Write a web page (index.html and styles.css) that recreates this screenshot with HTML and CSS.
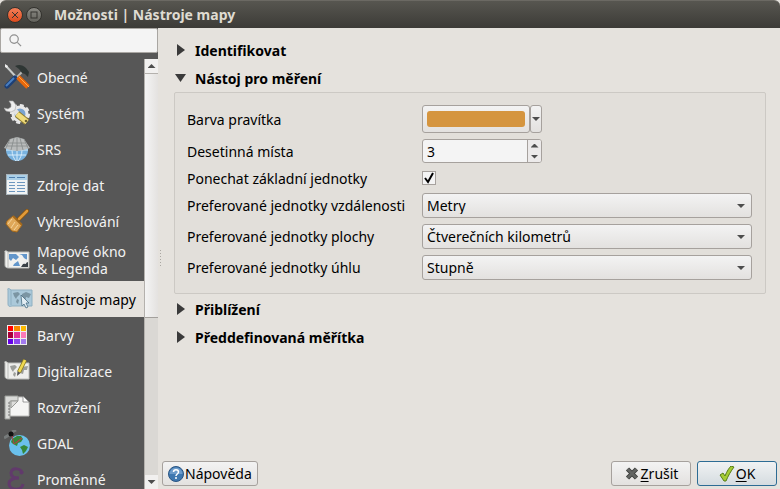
FILE: index.html
```html
<!DOCTYPE html>
<html lang="cs">
<head>
  <meta charset="UTF-8" />
  <meta name="viewport" content="width=device-width, initial-scale=1.0"/>
  <title>Možnosti | Nástroje mapy</title>
  <link rel="stylesheet" href="styles.css">
</head>

<body>
  <header class="titlebar">
    <button class="window-button close" aria-label="Zavřít">
      <svg viewBox="0 0 8 8"><path d="M1 1L7 7M7 1L1 7"/></svg>
    </button>
    <button class="window-button" aria-label="Maximalizovat">
      <svg viewBox="0 0 8 8"><rect x="1" y="1" width="6" height="6"/></svg>
    </button>
    <h1>Možnosti | Nástroje mapy</h1>
  </header>

  <div class="dialog">
    <aside class="sidebar">
      <div class="search">
        <svg viewBox="0 0 14 14"><circle cx="5.5" cy="5.5" r="4.5"/><path d="M9 9L13 13"/></svg>
        <input type="search" aria-label="Hledat">
      </div>
      <div class="list">
        <nav>
          <a href="#obecne">
            <svg viewBox="0 0 26 26">
              <path d="M2 2L13 14" stroke="#c9cccb" stroke-width="2"/>
              <path d="M1 0L4 2L3 4L1 3Z" fill="#eee"/>
              <path d="M20 6L11 15" stroke="#b8b8b4" stroke-width="2"/>
              <path d="M11 2C15 0 19 1 22 4L25 8L24 13L21 10L18 9L15 5Z" fill="#2e3634"/>
              <path d="M11 14L3 22" stroke="#1c3f77" stroke-width="5" stroke-linecap="round"/>
              <path d="M10 14L2 22" stroke="#4a7fc0" stroke-width="2"/>
              <path d="M14 13L24 23" stroke="#e8670a" stroke-width="5"/>
              <path d="M15 13L25 23" stroke="#fba64d" stroke-width="1"/>
            </svg>
            <span>Obecné</span>
          </a>
          <a href="#system">
            <svg viewBox="0 0 26 26">
              <circle cx="16" cy="14" r="7" fill="#7aa3d0" stroke="#e8e8e8" stroke-width="3"/>
              <circle cx="16" cy="14" r="9" fill="none" stroke="#e8e8e8" stroke-width="2" stroke-dasharray="4 3"/>
              <path d="M9 9L14 14" stroke="#e2e2e2" stroke-width="5"/>
              <path d="M5 1L9 1L12 5L11 10L7 12L2 11L0 8L4 9L7 7L7 4Z" fill="#eee" stroke="#aaa" stroke-width=".6"/>
              <path d="M13 14L23 22" stroke="#8f7d2f" stroke-width="7"/>
              <path d="M13 14L23 22" stroke="#f0dc7c" stroke-width="5"/>
              <circle cx="22" cy="21" r="1.3" fill="#6b6030"/>
            </svg>
            <span>Systém</span>
          </a>
          <a href="#srs">
            <svg viewBox="0 0 26 26">
              <circle cx="13" cy="14" r="11" fill="#79b3e0"/>
              <path d="M2 14H24M4 19H22M13 14V25M8 14C8 19 10 23 12 25M18 14C18 19 16 23 14 25" stroke="#d6ebfa" stroke-width="1" fill="none"/>
              <path d="M0 12L6 3L13 1L20 3L26 12L20 14L13 15L6 14Z" fill="#b9bcbc"/>
              <path d="M13 1V15M10 2L7 14M16 2L19 14M6 3L2 12M20 3L24 12M4 7H22M2 10H24" stroke="#858a8a" stroke-width=".8" fill="none"/>
            </svg>
            <span>SRS</span>
          </a>
          <a href="#zdroje">
            <svg viewBox="0 0 26 26">
              <rect x="2.5" y="2.5" width="21" height="20" fill="#f1f3f4" stroke="#a8b4bb"/>
              <rect x="3" y="3" width="20" height="5" fill="#abd0e8"/>
              <path d="M5 5.5H11M13 5.5H21" stroke="#4f7fae" stroke-width="1"/>
              <path d="M5 10.5H11M13 10.5H21M5 13.5H11M13 13.5H21M5 16.500H11M13 16.500H21M5 19.500H11M13 19.500H21" stroke="#6d97bf" stroke-width="1"/>
            </svg>
            <span>Zdroje dat</span>
          </a>
          <a href="#vykreslovani">
            <svg viewBox="0 0 26 26">
              <path d="M23 3L15 11" stroke="#8a5208" stroke-width="4" stroke-linecap="round"/>
              <path d="M23 3L15 11" stroke="#e09a3a" stroke-width="2.6" stroke-linecap="round"/>
              <path d="M9 8L18 17L13 24L8 23L2 16L3 13Z" fill="#dfa758" stroke="#a5691b"/>
              <path d="M9 8L18 17" stroke="#a5691b" stroke-width="2"/>
              <path d="M8 11L4 16M11 14L7 20M14 17L10 22" stroke="#f4d49c"/>
            </svg>
            <span>Vykreslování</span>
          </a>
          <a href="#mapove-okno" class="tall">
            <svg viewBox="0 0 26 26">
              <path d="M1 5C0 4 2 3 4 5H25V21H5C2 21 1 20 1 18Z" fill="#f1f1ef" stroke="#b9bab7"/>
              <path d="M4 5V20" stroke="#b9bab7"/>
              <path d="M5 7H12L15 10L12 13L9 11L7 14L5 12ZM15 7H23V13L20 11L18 8ZM10 17L14 14L16 19H9Z" fill="#6296cb"/>
              <path d="M17 20L19 17L24 15V20Z" fill="#3a4147"/>
              <path d="M18 16L23 12L22 17Z" fill="#eee"/>
            </svg>
            <span>Mapové okno<br>&amp; Legenda</span>
          </a>
          <a href="#nastroje-mapy" class="selected">
            <svg viewBox="0 0 26 26">
              <path d="M1 4C0 2 2 2 4 4H25V20H5C2 21 1 20 1 18Z" fill="#abc9da" stroke="#8fb0c2"/>
              <path d="M4 4V19" stroke="#8fb0c2"/>
              <path d="M6 7L11 6L13 8L10 11L9 13L7 10ZM10 13L12 14L11 18L9 16ZM15 8L19 6L24 8L22 12L19 11L18 16L16 15L15 11Z" fill="#7b95a3"/>
              <path d="M14 9L15 20L17 18L19 22L21 21L19 17L22 17Z" fill="#e2edf3" stroke="#496d83" stroke-width=".8"/>
            </svg>
            <span>Nástroje mapy</span>
          </a>
          <a href="#barvy">
            <svg viewBox="0 0 26 26">
              <rect x="3" y="3" width="20" height="20" fill="#eee"/>
              <path d="M4 4H9V9H4Z" fill="#f00"/><path d="M10 4H16V9H10Z" fill="#f78a00"/><path d="M17 4H22V9H17Z" fill="#fcb900"/>
              <path d="M4 10H9V16H4Z" fill="#a8003a"/><path d="M10 10H16V16H10Z" fill="#e0349a"/><path d="M17 10H22V16H17Z" fill="#fb79b8"/>
              <path d="M4 17H9V22H4Z" fill="#6500e8"/><path d="M10 17H16V22H10Z" fill="#8d48f0"/><path d="M17 17H22V22H17Z" fill="#a27aef"/>
            </svg>
            <span>Barvy</span>
          </a>
          <a href="#digitalizace">
            <svg viewBox="0 0 26 26">
              <path d="M1 5C0 3 2 3 4 5H25V21H5C2 21 1 20 1 18Z" fill="#eeeeec" stroke="#bcbdba"/>
              <path d="M4 5V20" stroke="#bcbdba"/>
              <path d="M6 8L11 7L13 9L10 12L9 14L7 11ZM10 14L12 15L11 19L9 17ZM17 9L24 8L23 12L20 12L19 16L16 15Z" fill="#9c9e9b"/>
              <path d="M21 2L15 14" stroke="#8b7a22" stroke-width="4"/>
              <path d="M21 2L15 14" stroke="#f0d951" stroke-width="2.6"/>
              <path d="M13.5 13L16.5 15L13 18Z" fill="#555"/>
            </svg>
            <span>Digitalizace</span>
          </a>
          <a href="#rozvrzeni">
            <svg viewBox="0 0 26 26">
              <path d="M5 3H20L25 8V22H5Z" fill="#f5f5f4" stroke="#bcbcba"/>
              <path d="M19 2V8H25Z" fill="#fff" stroke="#777" stroke-width=".7"/>
              <path d="M1 2H14V7H6V25H1Z" fill="#d9dad8" stroke="#989a96"/>
              <path d="M7 7H14L7 14Z" fill="#dededc" stroke="#989a96"/>
              <path d="M4 9H6M4 12H6M4 15H6M4 18H6M4 21H6" stroke="#777"/>
            </svg>
            <span>Rozvržení</span>
          </a>
          <a href="#gdal">
            <svg viewBox="0 0 26 26">
              <circle cx="15.5" cy="15.5" r="10.5" fill="#6ac0ec"/>
              <path d="M8 9L13 6L17 6L19 9L17 12L14 13L13 16L9 14L7 12ZM16 17L20 15L24 17L22 21L19 24L18 20Z" fill="#36883a"/>
              <path d="M0 8L5 5M8 2L12 0" stroke="#777b7b" stroke-width="3"/>
              <circle cx="7" cy="4" r="2.5" fill="#111"/>
              <path d="M8 6L10 14L18 8L12 13" stroke="#bb3a4a" stroke-width=".9" fill="none"/>
            </svg>
            <span>GDAL</span>
          </a>
          <a href="#promenne">
            <svg viewBox="0 0 26 26">
              <path d="M18 7C17 2 8 1 7 7C7 11 10 12 15 12C9 12 5 14 5 18C6 25 18 25 19 18" fill="none" stroke="#613a6b" stroke-width="3"/>
              <circle cx="17.5" cy="6.5" r="2" fill="#613a6b"/>
            </svg>
            <span>Proměnné</span>
          </a>
        </nav>
        <div class="scrollbar">
          <button aria-label="Nahoru"><i class="triangle up"></i></button>
          <div class="track"><div class="thumb"></div></div>
          <button aria-label="Dolů"><i class="triangle"></i></button>
        </div>
      </div>
    </aside>

    <div class="splitter"></div>

    <main>
      <div class="groups">
        <details>
          <summary>Identifikovat</summary>
        </details>
        <details open>
          <summary>Nástoj pro měření</summary>
          <form class="group-box">
            <label for="color">Barva pravítka</label>
            <div class="color-picker">
              <button type="button" id="color"><span class="swatch"></span></button>
              <button type="button" class="color-menu" aria-label="Nabídka barev"><i class="triangle"></i></button>
            </div>

            <label for="decimals">Desetinná místa</label>
            <div class="spinbox">
              <input type="number" id="decimals" value="3">
              <div class="steps">
                <button type="button" aria-label="Zvýšit"><i class="triangle up"></i></button>
                <button type="button" aria-label="Snížit"><i class="triangle"></i></button>
              </div>
            </div>

            <label for="keep">Ponechat základní jednotky</label>
            <div class="check">
              <input type="checkbox" id="keep" checked>
              <svg viewBox="0 0 14 14"><path d="M3 7L6 11L11 2"/></svg>
            </div>

            <label for="distance">Preferované jednotky vzdálenosti</label>
            <div class="combo">
              <select id="distance"><option>Metry</option></select>
              <i class="triangle"></i>
            </div>

            <label for="area">Preferované jednotky plochy</label>
            <div class="combo">
              <select id="area"><option>Čtverečních kilometrů</option></select>
              <i class="triangle"></i>
            </div>

            <label for="angle">Preferované jednotky úhlu</label>
            <div class="combo">
              <select id="angle"><option>Stupně</option></select>
              <i class="triangle"></i>
            </div>
          </form>
        </details>
        <details>
          <summary>Přiblížení</summary>
        </details>
        <details>
          <summary>Předdefinovaná měřítka</summary>
        </details>
      </div>

      <footer>
        <button class="button help">
          <svg viewBox="0 0 16 16">
            <circle cx="8" cy="8" r="7.5" fill="#3f78b0" stroke="#2a5583"/>
            <path d="M1.5 8A6.5 6.5 0 0 1 14.5 8Z" fill="#6d9ccb"/>
            <path d="M5.5 6C5.5 3 10.5 3 10.5 6C10.5 8 8 8 8 10" fill="none" stroke="#fff" stroke-width="1.5"/>
            <circle cx="8" cy="12" r="1" fill="#fff"/>
          </svg>
          <span>Nápověda</span>
        </button>
        <button class="button">
          <svg viewBox="0 0 16 16"><path d="M3.5 3L12.5 12M12.5 3L3.5 12" stroke="#3c3e3c" stroke-width="4.5"/><path d="M3.5 3L12.5 12M12.5 3L3.5 12" stroke="#626462" stroke-width="2.5"/></svg>
          <span><u>Z</u>rušit</span>
        </button>
        <button class="button default">
          <svg viewBox="0 0 16 16"><path d="M1 9L4 7L6 10C8 5 10 2 12 0L15 1C12 5 9 10 7 15H5Z" fill="#a5cc35" stroke="#567d17"/></svg>
          <span><u>O</u>K</span>
        </button>
      </footer>
    </main>
  </div>
</body>
</html>
```
FILE: styles.css
```css
* {
  margin: 0;
  padding: 0;
  box-sizing: border-box;
}

body {
  font-family: 'Noto Sans', sans-serif;
  font-size: 14px;
  line-height: 17px;
  color: #000;
  background: #e5e2dd;
  height: 100vh;
  display: flex;
  flex-direction: column;
  overflow: hidden;
}
button,
input,
select {
  font: inherit;
  color: inherit;
}
svg {
  display: block;
  flex: none;
}

/* window title bar */
.titlebar {
  flex: none;
  height: 28px;
  padding: 0 7px;
  display: flex;
  align-items: center;
  gap: 3px;
  background: linear-gradient(#575650, #3c3b37);
  border-top: 1px solid #6b6963;
  border-radius: 6px 6px 0 0;
}
.titlebar h1 {
  margin-left: 9px;
  font-size: 14px;
  font-weight: 700;
  color: #dfdbd2;
}
.window-button {
  width: 16px;
  height: 16px;
  display: flex;
  align-items: center;
  justify-content: center;
  border: 1px solid #33322e;
  border-radius: 50%;
  background: linear-gradient(#8b8a84, #63625c);
}
.window-button.close {
  background: linear-gradient(#f58059, #dd4b1d);
}
.window-button svg {
  width: 8px;
  height: 8px;
  fill: none;
  stroke: #35332f;
}

.dialog {
  flex: 1;
  min-height: 0;
  display: flex;
}

/* sidebar */
.sidebar {
  flex: none;
  width: 158px;
  display: flex;
  flex-direction: column;
  background: #575757;
}
.search {
  flex: none;
  height: 25px;
  margin-bottom: 6px;
  padding: 0 8px;
  display: flex;
  align-items: center;
  gap: 6px;
  border: 1px solid #a9a6a2;
  border-radius: 2px;
  background: #f4f4f4;
}
.search svg {
  width: 13px;
  height: 13px;
  fill: none;
  stroke: #8f8f8f;
  stroke-width: 1.3;
}
.search input {
  flex: 1;
  min-width: 0;
  border: 0;
  outline: 0;
  background: transparent;
}
.list {
  flex: 1;
  min-height: 0;
  display: flex;
}
nav {
  flex: 1;
  overflow: hidden;
}
nav a {
  height: 36px;
  padding-left: 4px;
  display: flex;
  align-items: center;
  gap: 7px;
  color: #f2f2f2;
  text-decoration: none;
  white-space: nowrap;
}
nav a.tall {
  height: 42px;
}
nav a.selected {
  padding-left: 7px;
  color: #000;
  background: #e5e2dd;
}
nav svg {
  width: 26px;
  height: 26px;
  fill: none;
}

/* scrollbar */
.scrollbar {
  flex: none;
  width: 14px;
  display: flex;
  flex-direction: column;
  border-left: 1px solid #b4b1ad;
  background: #dad8d4;
}
.scrollbar button {
  flex: none;
  height: 14px;
  display: flex;
  align-items: center;
  justify-content: center;
  border: 0;
  background: #f1f0ef;
}
.track {
  flex: 1;
}
.thumb {
  height: 61%;
  border-top: 1px solid #b4b1ad;
  border-bottom: 1px solid #a3a09c;
  background: linear-gradient(to right, #f4f4f4, #e4e2e0);
}
.triangle {
  width: 8px;
  height: 4px;
  background: #4d4d4d;
  clip-path: polygon(0 0, 100% 0, 50% 100%);
}
.triangle.up {
  clip-path: polygon(0 100%, 100% 100%, 50% 0);
}

.splitter {
  flex: none;
  width: 1px;
  height: 18px;
  margin: 0 1px 0 2px;
  align-self: center;
  background: repeating-linear-gradient(#aaa7a2 0 1px, transparent 1px 3px);
}

/* settings */
main {
  flex: 1;
  min-width: 0;
  display: flex;
  flex-direction: column;
}
.groups {
  flex: 1;
  padding: 8px 14px 0 12px;
}
summary {
  height: 28px;
  padding-left: 3px;
  display: flex;
  align-items: center;
  gap: 10px;
  font-weight: 700;
}
summary::before {
  content: '';
  width: 8px;
  height: 12px;
  background: #3a3a3a;
  clip-path: polygon(0 0, 100% 50%, 0 100%);
}
details[open] summary {
  padding-left: 1px;
  gap: 9px;
}
details[open] summary::before {
  width: 11px;
  height: 8px;
  clip-path: polygon(0 0, 100% 0, 50% 100%);
}
.group-box {
  padding: 12px 13px 13px 12px;
  margin-bottom: 1px;
  display: grid;
  grid-template-columns: 227px 1fr;
  grid-template-rows: 28px 24px 18px 25px 25px 25px;
  gap: 6px 8px;
  align-items: center;
  border: 1px solid #ccc9c4;
  border-radius: 2px;
  background: #e2dfda;
}
.group-box label {
  white-space: nowrap;
}

.color-picker {
  display: flex;
  height: 28px;
}
.color-picker button {
  border: 1px solid #a6a19d;
  border-radius: 3px;
  background: linear-gradient(#f3f3f3, #e3e1df);
}
#color {
  width: 108px;
  padding: 0 4px;
}
.swatch {
  display: block;
  height: 16px;
  border-radius: 3px;
  background: #d5953f;
}
.color-picker .color-menu {
  width: 12px;
  display: flex;
  align-items: center;
  justify-content: center;
}

.spinbox {
  width: 120px;
  height: 24px;
  display: flex;
  border: 1px solid #a6a19d;
  border-radius: 3px;
  background: #f4f4f4;
  overflow: hidden;
}
.spinbox input {
  flex: 1;
  min-width: 0;
  padding-left: 4px;
  border: 0;
  outline: 0;
  background: transparent;
  appearance: textfield;
}
.spinbox input::-webkit-inner-spin-button {
  display: none;
}
.steps {
  width: 14px;
  display: flex;
  flex-direction: column;
  border-left: 1px solid #a6a19d;
  background: #eceaea;
}
.steps button {
  flex: 1;
  display: flex;
  align-items: center;
  justify-content: center;
  border: 0;
  background: transparent;
}

.check {
  position: relative;
  width: 14px;
  height: 14px;
}
.check input {
  display: block;
  width: 14px;
  height: 14px;
  appearance: none;
  border: 1px solid #a6a19d;
  background: #f4f4f4;
}
.check svg {
  position: absolute;
  inset: 0;
  fill: none;
  stroke: #000;
  stroke-width: 2;
  pointer-events: none;
  visibility: hidden;
}
.check input:checked + svg {
  visibility: visible;
}

.combo {
  position: relative;
}
.combo select {
  display: block;
  width: 100%;
  height: 25px;
  padding: 0 20px 0 4px;
  appearance: none;
  border: 1px solid #a6a19d;
  border-radius: 3px;
  background: linear-gradient(#f3f3f3, #e3e1df);
}
.combo .triangle {
  position: absolute;
  right: 7px;
  top: 11px;
  pointer-events: none;
}

/* bottom buttons */
footer {
  padding: 0 3px 3px 0;
  display: flex;
  gap: 6px;
}
.button {
  min-width: 80px;
  height: 25px;
  padding: 0 5px;
  display: flex;
  align-items: center;
  justify-content: center;
  gap: 1px;
  border: 1px solid #a6a19d;
  border-radius: 3px;
  background: linear-gradient(#f3f3f3, #e3e1df);
}
.button svg {
  width: 16px;
  height: 16px;
}
.button u {
  text-underline-offset: 2px;
}
.button.help {
  margin-right: auto;
}
.button.default {
  border-color: #2d6c94;
  background: linear-gradient(#f0f2f3, #d5dce0);
}
```
